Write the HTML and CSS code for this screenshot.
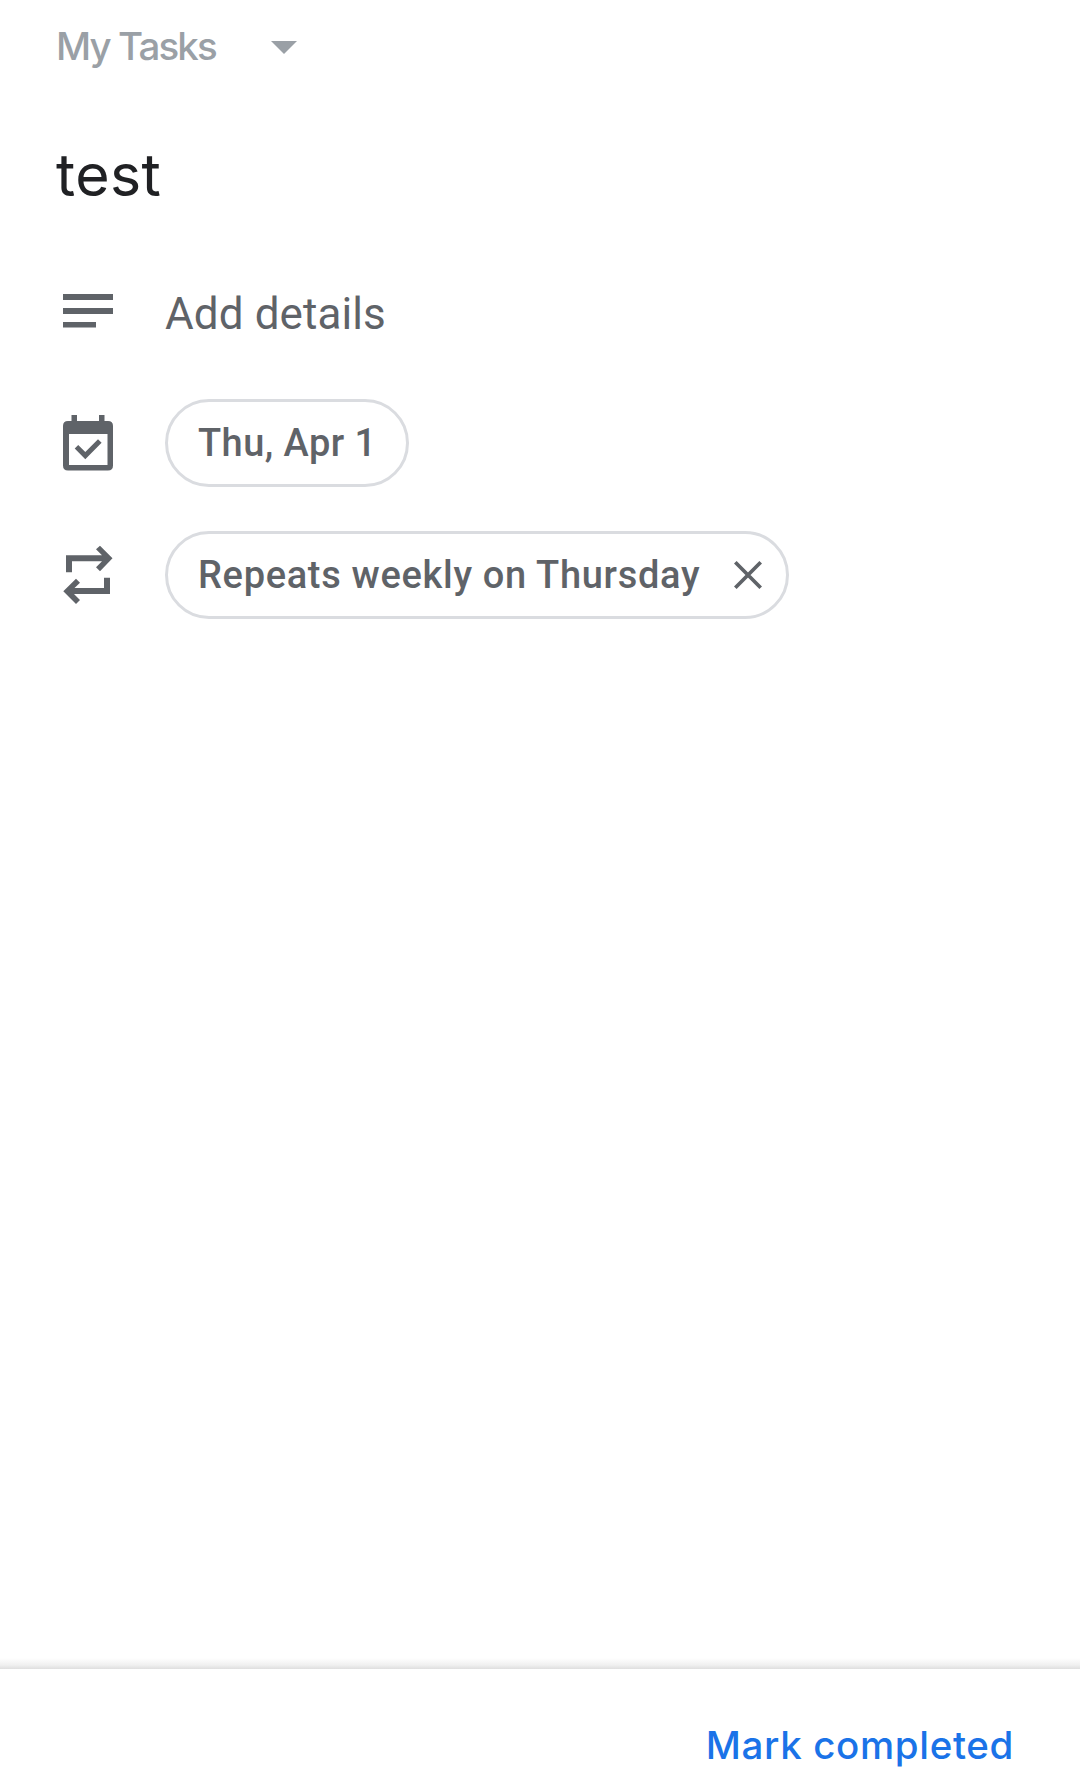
FILE: index.html
```html
<!DOCTYPE html>
<html lang="en">
<head>
<meta charset="utf-8">
<title>Task details</title>
<link rel="stylesheet" href="styles.css">
</head>
<body>
<main class="task">
  <button class="list-picker"><span class="list-name">My Tasks</span>
    <svg class="caret" viewBox="0 0 26 13"><path d="M0 0h26L13 13z"/></svg>
  </button>
  <h1 class="title">test</h1>
  <div class="row details">
    <svg class="icon" viewBox="0 0 60 60"><path d="M7 12h50v6H7zM7 26h50v6H7zM7 40h33v5.600H7z"/></svg>
    <span class="placeholder">Add details</span>
  </div>
  <div class="row">
    <svg class="icon" viewBox="0 0 60 60"><path fill-rule="evenodd" d="M15.500 2H21v6h22V2h5.500v6H52q5 0 5 5v39.500q0 5-5 5H12q-5 0-5-5V13q0-5 5-5h3.500zM13 21v31h38.500V21z"/><path d="M18.700 35.500L22.200 32l7.100 7.100L42 26.200l3.600 3.500-16.300 16.500z"/></svg>
    <button class="chip date-chip"><span>Thu, Apr 1</span></button>
  </div>
  <div class="row">
    <svg class="icon" viewBox="0 0 60 60"><path d="M10 27.300v-17h36l-6-6L44 .7l12.500 12.600L44 26.300l-4-4 6-6H16v11zM54 32.700v16.200H18l6 6.200-4 4L7.300 46.200 20 33.700l4 4-5.500 5.400H48V32.700z"/></svg>
    <button class="chip repeat-chip"><span>Repeats weekly on Thursday</span>
      <svg class="close" viewBox="0 0 28 28"><path d="M1.300 1.300l25.400 25.400M26.700 1.300L1.300 26.700"/></svg>
    </button>
  </div>
</main>
<footer class="footer"><button class="complete">Mark completed</button></footer>
</body>
</html>
```
FILE: styles.css
```css
* { box-sizing: border-box; }
body { margin: 0; height: 1787px; display: flex; flex-direction: column; background: #fff; font-family: Roboto, sans-serif; color: #5f6368; overflow: hidden; }
button { font: inherit; color: inherit; background: none; border: 0; padding: 0; }
.task { flex: 1; padding: 17px 56px 0; }
.list-picker { display: flex; align-items: center; height: 60px; color: #9aa0a6; font: 500 38.5px/60px Inter, sans-serif; letter-spacing: -1.9px; }
.list-name { width: 215px; padding-bottom: 2px; line-height: 58px; text-align: left; }
.caret { width: 26px; height: 13px; fill: currentColor; }
.title { margin: 56px 0 0; font: 400 59px/84px Inter, sans-serif; letter-spacing: 0.4px; color: #202124; }
.row { display: flex; align-items: center; height: 88px; margin-bottom: 44px; }
.details { margin: 51px 0 43px; }
.icon { width: 60px; height: 60px; margin-right: 49px; fill: #5f6368; }
.placeholder { font-size: 44px; letter-spacing: 0.1px; padding-top: 3px; }
.chip { display: flex; align-items: center; justify-content: space-between; height: 88px; padding: 0 24px 0 30px; border: 3px solid #dadce0; border-radius: 44px; font-size: 38px; font-weight: 500; white-space: nowrap; }
.date-chip { width: 244px; letter-spacing: 0.45px; }
.repeat-chip { width: 624px; letter-spacing: 0.68px; }
.close { width: 28px; height: 28px; stroke: currentColor; stroke-width: 3.7; }
.footer { height: 129px; padding: 57px 66px 0; background: linear-gradient(#fff, #f0f0f0 7px, #dedede 11px, #fff 11px); display: flex; justify-content: flex-end; align-items: flex-start; }
.complete { color: #1a73e8; font: 500 38.5px/60px Inter, sans-serif; letter-spacing: 0.65px; }
```
